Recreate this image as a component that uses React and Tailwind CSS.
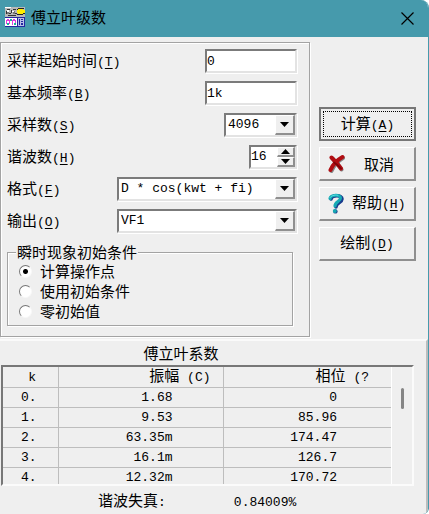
import React from "react";

const etched =
  "border border-[#a3a3a3] shadow-[inset_1px_1px_0_#fff,1px_1px_0_#fff]";
const sunken =
  "border-2 border-t-[#7b7b7b] border-l-[#7b7b7b] border-b-[#e3e3e3] border-r-[#e3e3e3] bg-white shadow-[1px_1px_0_#fff]";
const raised =
  "border-t border-l border-b-2 border-r-2 border-t-white border-l-white border-b-[#8f8f8f] border-r-[#8f8f8f] bg-[#efefef]";
const mono = "font-['Liberation_Mono','Noto_Sans_CJK_SC',monospace] text-[13px]";

function Key({ children }) {
  return (
    <span className={mono}>
      (<span className="underline underline-offset-2">{children}</span>)
    </span>
  );
}

function Row({ id, label, hotkey, children }) {
  return (
    <div className="flex h-8 items-center justify-between pr-3 pl-1.5">
      <label htmlFor={id} className="whitespace-nowrap">
        {label}
        <Key>{hotkey}</Key>
      </label>
      {children}
    </div>
  );
}

function Select({ id, width, value }) {
  return (
    <div className={`relative h-6 ${width} ${sunken}`}>
      <select
        id={id}
        defaultValue={value}
        className={`block h-5 w-full appearance-none bg-transparent pl-0.5 leading-5 outline-none ${mono}`}
      >
        <option>{value}</option>
      </select>
      <span
        className={`pointer-events-none absolute top-0 right-0 flex h-5 w-5 items-center justify-center ${raised}`}
      >
        <svg width="9" height="5" viewBox="0 0 9 5">
          <path d="M0 0h9L4.5 5z" />
        </svg>
      </span>
    </div>
  );
}

function AppIcon() {
  return (
    <svg width="20" height="20" viewBox="0 0 20 20" shapeRendering="crispEdges">
      <path fill="#b8b8b8" d="M0 0h20v10H0z" />
      <path fill="#333" d="M1 4h1v3H1zM2 2h3v1H2zM4 6h2v1H4zM6 3h1v3H6zM8 2h3v1H8zM10 6h2v1h-2zM3 8h8v1H3z" />
      <path fill="#777" d="M2 5h2v2H2zM8 4h2v3H8z" />
      <path fill="#fff" d="M2 3h2v2H2zM7 4h2v1H7zM0 0h6v1H0z" />
      <path fill="#ffef00" d="M13 2h5v5h-5zM12 3h8v3h-8z" />
      <path fill="#222" d="M13 1h6v1h-6zM12 7h6v1h-6zM18 6h2v1h-2zM12 2h1v1h-1z" />
      <path fill="#fff" d="M0 11h12v8H0z" />
      <path fill="#e33bdf" d="M1 13h1v4H1zM2 12h2v2H2zM4 13h1v4H4zM7 13h1v5H7zM8 12h2v2H8zM10 13h1v4h-1z" />
      <path fill="#18b59c" d="M2 16h2v2H2zM5 12h2v2H5zM9 16h2v2H9z" />
      <path fill="#2428a0" d="M0 10h20v1H0zM12 11h1v9h-1zM0 19h20v1H0zM19 11h1v8h-1z" />
      <path fill="#b9bfe8" d="M13 11h6v8h-6z" />
      <path fill="#2428a0" d="M14 12h1v6h-1zM16 12h2v1h-2zM16 14h2v1h-2zM16 16h2v2h-2z" />
    </svg>
  );
}

function CrossIcon() {
  return (
    <svg width="18" height="19" viewBox="0 0 18 19" fill="none" strokeLinecap="round">
      <path stroke="#888" strokeWidth="4" d="M4.500 4.500c3 3 6 6 9 11M15 4C10 7 6 11 3.500 17" />
      <path stroke="#b00d12" strokeWidth="4" d="M3.500 3.500c3 3 6 6 9.500 11M14.500 3C10 5.500 5 10 2.500 16" />
      <path stroke="#7c0508" strokeWidth="1.600" d="M6 8.500c2.500 1.500 4.500 3.500 7 6" />
    </svg>
  );
}

function HelpIcon() {
  return (
    <svg width="16" height="21" viewBox="0 0 16 21" fill="none" strokeLinecap="round">
      <path stroke="#183a8c" strokeWidth="3.600" d="M3 6c1-4 11-4.500 11 0 0 3.500-6 3.500-6 8" />
      <path stroke="#16a9b4" strokeWidth="3.200" d="M2 5.500C3 1.500 12.500 1 12.500 5c0 3.500-5.500 3.500-5.500 8" />
      <path stroke="#5fe3e6" strokeWidth="1" d="M2 4.500C4 2 8 1.500 10 2.500" />
      <circle cx="7.400" cy="18.400" r="2.200" fill="#183a8c" />
      <circle cx="6.800" cy="18" r="2" fill="#16a9b4" />
    </svg>
  );
}

const actionButton = `relative flex h-[34px] w-full items-center whitespace-nowrap ${raised}`;

const rows = [
  ["0.", "1.68", "0"],
  ["1.", "9.53", "85.96"],
  ["2.", "63.35m", "174.47"],
  ["3.", "16.1m", "126.7"],
  ["4.", "12.32m", "170.72"],
];

export default function App() {
  return (
    <div className="flex min-h-screen flex-col overflow-hidden rounded-tr-lg rounded-br-md border-r border-[#469aac] bg-[#efefef] font-['Noto_Sans_CJK_SC',sans-serif] text-[15px] leading-5 text-black">
      <header className="flex h-[37px] items-center justify-between bg-[#469aac] pr-3.5 pb-1 pl-[5px]">
        <div className="flex items-center gap-1.5">
          <AppIcon />
          <h1>傅立叶级数</h1>
        </div>
        <button type="button" aria-label="关闭" className="pt-1">
          <svg width="13" height="13" viewBox="0 0 13 13" fill="none" stroke="#000" strokeWidth="1.200">
            <path d="M.5.5l12 12M12.500.5l-12 12" />
          </svg>
        </button>
      </header>

      <main className="flex gap-[9px] pt-[5px] pr-3">
        <section className={`flex-1 pt-0.5 pb-2.5 ${etched}`}>
          <Row id="start" label="采样起始时间" hotkey="T">
            <input id="start" defaultValue="0" className={`h-6 w-[92px] outline-none ${sunken} ${mono}`} />
          </Row>
          <Row id="freq" label="基本频率" hotkey="B">
            <input id="freq" defaultValue="1k" className={`h-6 w-[92px] outline-none ${sunken} ${mono}`} />
          </Row>
          <Row id="samples" label="采样数" hotkey="S">
            <Select id="samples" width="w-[73px]" value="4096" />
          </Row>
          <Row id="harmonics" label="谐波数" hotkey="H">
            <div className={`flex h-6 w-12 ${sunken}`}>
              <input id="harmonics" defaultValue="16" className={`w-0 flex-1 outline-none ${mono}`} />
              <div className="flex w-[18px] flex-col">
                <button type="button" aria-label="增加" className={`flex flex-1 items-center justify-center ${raised}`}>
                  <svg width="9" height="5" viewBox="0 0 9 5">
                    <path d="M0 5h9L4.500 0z" />
                  </svg>
                </button>
                <button type="button" aria-label="减少" className={`flex flex-1 items-center justify-center ${raised}`}>
                  <svg width="9" height="5" viewBox="0 0 9 5">
                    <path d="M0 0h9L4.500 5z" />
                  </svg>
                </button>
              </div>
            </div>
          </Row>
          <Row id="format" label="格式" hotkey="F">
            <Select id="format" width="w-[180px]" value="D * cos(kwt + fi)" />
          </Row>
          <Row id="output" label="输出" hotkey="O">
            <Select id="output" width="w-[180px]" value="VF1" />
          </Row>

          <div className="pt-1.5 pr-4 pl-1.5">
            <fieldset className={`pb-1 ${etched}`}>
              <legend className="ml-2 h-[18px] bg-[#efefef] px-px leading-[18px]">瞬时现象初始条件</legend>
              {["计算操作点", "使用初始条件", "零初始值"].map((text, i) => (
                <label key={text} className="flex h-5 items-center gap-2 pl-[11px]">
                  <input
                    type="radio"
                    name="initial"
                    defaultChecked={i === 0}
                    className="h-[13px] w-[13px] appearance-none rounded-full border border-t-[#777] border-r-[#f8f8f8] border-b-[#f8f8f8] border-l-[#777] bg-white checked:bg-[radial-gradient(circle,#000_2px,#fff_3px)]"
                  />
                  {text}
                </label>
              ))}
            </fieldset>
          </div>
        </section>

        <nav className="flex w-[97px] flex-col gap-1.5 pt-[65px]">
          <button
            type="button"
            className="flex h-[34px] w-full items-center justify-center border-2 border-[#777] bg-[#efefef] p-0.5"
          >
            <span className="flex h-full w-full items-center justify-center border border-dotted border-black">
              <span>
                计算<Key>A</Key>
              </span>
            </span>
          </button>
          <button type="button" className={`${actionButton} gap-[18px] pl-2`}>
            <CrossIcon />
            取消
          </button>
          <button type="button" className={`${actionButton} gap-2 pl-2`}>
            <HelpIcon />
            <span>
              帮助<Key>H</Key>
            </span>
          </button>
          <button type="button" className={`${actionButton} justify-center`}>
            <span>
              绘制<Key>D</Key>
            </span>
          </button>
        </nav>
      </main>

      <section className="mt-0.5 flex-1 border-t-2 border-r-2 border-t-[#fafafa] border-r-[#bdbdbd] pr-3">
        <h2 className="py-0.5 pr-[52px] text-center">傅立叶系数</h2>
        <div className="ml-px flex h-[121px] overflow-hidden border-2 border-t-[#777] border-r-[#fbfbfb] border-b-[#fbfbfb] border-l-[#777]">
          <table className={`h-[120px] flex-1 table-fixed border-collapse leading-[18px] ${mono}`}>
            <thead>
              <tr className="h-5 border-b border-[#bdbdbd]">
                <th className="w-[55px] border-r border-[#bdbdbd] p-0 pt-0.5 pl-1 font-normal leading-[17px]">k</th>
                <th className="w-[165px] border-r border-[#bdbdbd] p-0 pt-0.5 pr-3 text-right font-normal leading-[17px]">
                  <span className="text-[15px]">振幅</span> (C)
                </th>
                <th className="border-r border-white p-0 pt-0.5 pr-[22px] text-right font-normal leading-[17px]">
                  <span className="text-[15px]">相位</span> (?
                </th>
              </tr>
            </thead>
            <tbody>
              {rows.map(([k, amp, phase]) => (
                <tr key={k} className="h-5 border-b border-[#bdbdbd]">
                  <td className="border-r border-[#bdbdbd] p-0 pt-px pl-[18px]">{k}</td>
                  <td className="border-r border-[#bdbdbd] p-0 pt-px pr-[50px] text-right">{amp}</td>
                  <td className="border-r border-white p-0 pt-px pr-[54px] text-right">{phase}</td>
                </tr>
              ))}
            </tbody>
          </table>
          <div className="w-5 pt-[21px] pl-[9px]">
            <div className="h-[21px] w-[3px] rounded-sm bg-[#858585]" />
          </div>
        </div>
        <p className="flex items-baseline gap-[68px] pt-1 pl-[98px]">
          <span>
            谐波失真<span className={mono}>:</span>
          </span>
          <span className={mono}>0.84009%</span>
        </p>
      </section>
    </div>
  );
}
